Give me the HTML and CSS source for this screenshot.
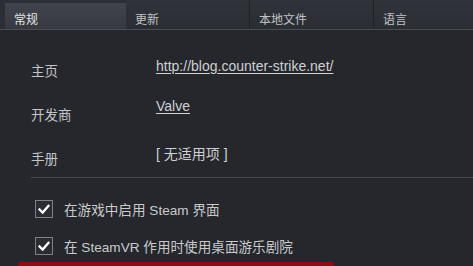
FILE: index.html
```html
<!DOCTYPE html>
<html lang="zh-CN">
<head>
<meta charset="utf-8">
<link rel="stylesheet" href="styles.css">
</head>
<body>
<div class="page">
  <div class="tabs">
    <div class="tab active">常规</div>
    <div class="tab">更新</div>
    <div class="tab">本地文件</div>
    <div class="tab last">语言</div>
  </div>
  <div class="content">
    <div class="info">
      <div class="row r1"><span class="label">主页</span><a class="value link">http://blog.counter-strike.net/</a></div>
      <div class="row r2"><span class="label">开发商</span><a class="value link">Valve</a></div>
      <div class="row r3"><span class="label">手册</span><span class="value">[ 无适用项 ]</span></div>
    </div>
    <div class="sep"></div>
    <div class="checks">
      <div class="check"><span class="box"><svg viewBox="0 0 18 18" width="18" height="18"><path d="M4 9.5 L7.5 13 L14 5.5" fill="none" stroke="#fff" stroke-width="2.6" stroke-linecap="square"/></svg></span><span class="ctext">在游戏中启用 Steam 界面</span></div>
      <div class="check"><span class="box"><svg viewBox="0 0 18 18" width="18" height="18"><path d="M4 9.5 L7.5 13 L14 5.5" fill="none" stroke="#fff" stroke-width="2.6" stroke-linecap="square"/></svg></span><span class="ctext">在 SteamVR 作用时使用桌面游乐剧院</span></div>
    </div>
    <div class="redbar"></div>
  </div>
</div>
</body>
</html>
```
FILE: styles.css
```css
html, body {
  margin: 0;
  padding: 0;
  background: #25272d;
  overflow: hidden;
}
.page {
  width: 473px;
  height: 266px;
  font-family: "Liberation Sans", Arial, "Noto Sans CJK SC", sans-serif;
  color: #c5c6c9;
  display: flex;
  flex-direction: column;
}
.tabs {
  display: flex;
  height: 30px;
  flex: none;
  background: #2b2e34;
  border-bottom: 1px solid #4a4d55;
  padding-left: 5px;
  box-sizing: border-box;
}
.tab {
  width: 124px;
  box-sizing: border-box;
  border-right: 1px solid #202227;
  font-size: 12px;
  color: #c0c2c6;
  padding: 10px 0 0 9px;
  background: linear-gradient(#30333a, #2a2d33);
}
.tab.active {
  background: linear-gradient(#41444c, #363940);
  color: #e4e5e7;
  margin-top: 3px;
  padding-top: 7px;
  border-right: none;
  width: 121px;
}
.tab.last {
  flex: 1;
  border-right: none;
}
.content {
  flex: 1;
  min-height: 0;
  position: relative;
}
.info {
  display: flex;
  flex-direction: column;
  padding-top: 29px;
}
.row {
  display: flex;
  align-items: flex-start;
  height: 44px;
  font-size: 13.5px;
}
.row.r3 {
  height: 29px;
}
.label {
  width: 125px;
  padding-left: 31px;
  color: #c3c4c7;
  padding-top: 1px;
}
.row .value {
  color: #cfd0d2;
  font-size: 14px;
}
.r1 .value { margin-top: -1px; }
.r2 .value { margin-top: -5px; }
.r3 .value { margin-top: -4px; }
.link {
  text-decoration: underline;
  text-underline-offset: 2px;
}
.sep {
  margin-left: 31px;
  margin-top: 1px;
  height: 1px;
  background: #45484f;
}
.checks {
  display: flex;
  flex-direction: column;
  gap: 17px;
  padding: 21px 0 0 35px;
}
.check {
  display: flex;
  align-items: center;
  gap: 11px;
  font-size: 13.6px;
  color: #c9cacc;
}
.box {
  width: 18px;
  height: 18px;
  box-sizing: border-box;
  border: 1px solid #7d8086;
  background: #2a2c31;
  display: flex;
  align-items: center;
  justify-content: center;
}
.box svg {
  width: 16px;
  height: 16px;
}
.redbar {
  position: absolute;
  left: 18px;
  width: 316px;
  bottom: 0;
  height: 4px;
  background: #8a0d14;
  border-radius: 3px 3px 0 0;
}
```
